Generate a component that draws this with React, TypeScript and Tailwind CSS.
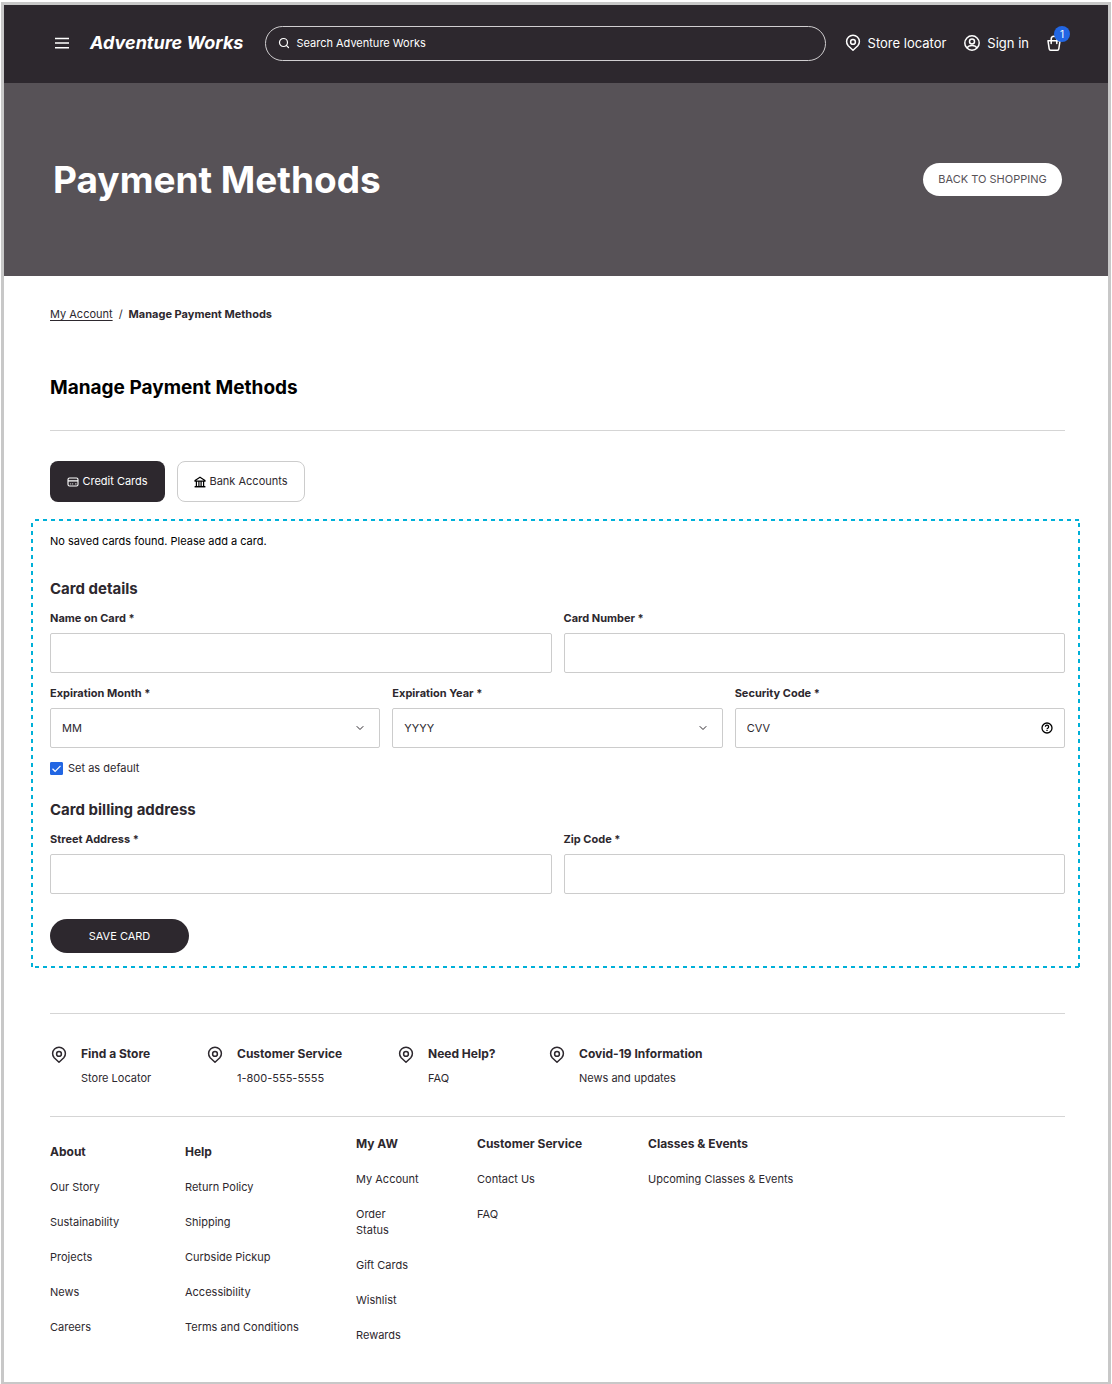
import type { ReactNode, SVGProps } from "react";
import { ChevronDown, Search } from "lucide-react";

const services = [
  { title: "Find a Store", text: "Store Locator" },
  { title: "Customer Service", text: "1-800-555-5555" },
  { title: "Need Help?", text: "FAQ" },
  { title: "Covid-19 Information", text: "News and updates" },
];

const footerColumns = [
  {
    title: "About",
    links: ["Our Story", "Sustainability", "Projects", "News", "Careers"],
    className: "pt-2",
  },
  {
    title: "Help",
    links: ["Return Policy", "Shipping", "Curbside Pickup", "Accessibility", "Terms and Conditions"],
    className: "pt-2",
  },
  {
    title: "My AW",
    links: ["My Account", "Order Status", "Gift Cards", "Wishlist", "Rewards"],
    className: "w-16",
  },
  { title: "Customer Service", links: ["Contact Us", "FAQ"], className: "" },
  { title: "Classes & Events", links: ["Upcoming Classes & Events"], className: "" },
];

function PinIcon(props: SVGProps<SVGSVGElement>) {
  return (
    <svg viewBox="0 0 18 18" fill="none" stroke="currentColor" strokeWidth="1.5" aria-hidden="true" {...props}>
      <path d="M9 16.2 4.2 11.8A6.4 6.4 0 1 1 13.8 11.8L9 16.2Z" strokeLinejoin="round" />
      <circle cx="9" cy="7.9" r="2.4" />
    </svg>
  );
}

function UserIcon(props: SVGProps<SVGSVGElement>) {
  return (
    <svg viewBox="0 0 18 18" fill="none" stroke="currentColor" strokeWidth="1.5" aria-hidden="true" {...props}>
      <circle cx="9" cy="9" r="7.2" />
      <circle cx="9" cy="7.4" r="2.5" />
      <path d="M4 14c1-1.9 2.8-2.6 5-2.6s4 .7 5 2.6" />
    </svg>
  );
}

function BagIcon(props: SVGProps<SVGSVGElement>) {
  return (
    <svg viewBox="0 0 16 18" fill="none" stroke="currentColor" strokeWidth="1.5" aria-hidden="true" {...props}>
      <path d="M2 6.8h12l-1.2 8c-.1.8-.6 1.4-1.4 1.4H4.6c-.8 0-1.3-.6-1.4-1.4L2 6.8Z" strokeLinejoin="round" />
      <path d="M5.2 9.6V5a2.8 2.8 0 0 1 5.6 0v4.6" strokeLinecap="round" />
    </svg>
  );
}

function CardIcon() {
  return (
    <svg className="h-3 w-3" viewBox="0 0 12 12" fill="none" stroke="currentColor" aria-hidden="true">
      <rect x="1" y="2" width="10" height="8" rx="1.5" strokeWidth="1.1" />
      <path d="M1 4.9h10" strokeWidth="1.3" />
      <path d="M3 7.9h1.2M5 7.9h1.2M8 7.9h1.6" strokeWidth="0.8" />
    </svg>
  );
}

function BankIcon() {
  return (
    <svg className="h-3 w-3" viewBox="0 0 12 12" fill="none" stroke="#000" strokeWidth="1.2" aria-hidden="true">
      <path d="M1 4.4 6 1.2l5 3.2v.8H1v-.8Z" strokeLinejoin="round" />
      <path d="M2.4 5v5M4.9 5v5M7.1 5v5M9.6 5v5" />
      <path d="M.6 10.7h10.8" strokeWidth="1.5" />
    </svg>
  );
}

function HelpIcon() {
  return (
    <svg className="h-3 w-3" viewBox="0 0 12 12" fill="none" stroke="#000" strokeWidth="1.3" aria-hidden="true">
      <circle cx="6" cy="6" r="5" />
      <path d="M4.4 4.8a1.6 1.6 0 1 1 2.4 1.4c-.5.3-.8.5-.8 1" />
      <path d="M6 8v1.1" />
    </svg>
  );
}

const fieldClass =
  "h-10 w-full rounded-[2px] border border-[#cccccc] bg-white px-[11px] text-[11px] text-[#2d282e] outline-none placeholder:text-[#2d282e] placeholder:opacity-100 focus:border-[#2266e3]";

function Field({ id, label, children }: { id: string; label: string; children: ReactNode }) {
  return (
    <div>
      <label htmlFor={id} className="mb-[7px] block text-[11px] leading-4 font-bold">
        {label} *
      </label>
      <div className="relative">{children}</div>
    </div>
  );
}

function SelectField({ id, label, hint }: { id: string; label: string; hint: string }) {
  return (
    <Field id={id} label={label}>
      <select id={id} className={`${fieldClass} appearance-none`}>
        <option>{hint}</option>
      </select>
      <ChevronDown className="pointer-events-none absolute top-3.5 right-3.5 h-3 w-3" strokeWidth={2} />
    </Field>
  );
}

function Header() {
  return (
    <header className="flex h-[78px] items-center bg-[#2d282e] pr-[38px] pb-0.5 pl-[50px] text-white">
      <button type="button" aria-label="Menu" className="mr-5">
        <svg className="h-4 w-4" viewBox="0 0 16 16" stroke="currentColor" strokeWidth="1.4" aria-hidden="true">
          <path d="M1 3.5h14M1 8h14M1 12.7h14" />
        </svg>
      </button>
      <a href="#" className="text-[18px] leading-6 font-bold whitespace-nowrap italic">
        Adventure Works
      </a>
      <label className="mr-[18px] ml-[22px] flex h-[35px] min-w-0 flex-1 items-center gap-1.5 rounded-full border border-[#d0ced0] px-3">
        <Search className="h-3 w-3" strokeWidth={2.4} />
        <input
          type="search"
          aria-label="Search Adventure Works"
          placeholder="Search Adventure Works"
          className="min-w-0 flex-1 bg-transparent text-[11px] outline-none placeholder:text-white placeholder:opacity-100"
        />
      </label>
      <nav className="flex items-center gap-[17px] text-[13px] leading-5 whitespace-nowrap">
        <a href="#" className="flex items-center gap-1.5">
          <PinIcon className="h-[18px] w-[18px]" />
          Store locator
        </a>
        <a href="#" className="flex items-center gap-1.5">
          <UserIcon className="h-[18px] w-[18px]" />
          Sign in
        </a>
        <a href="#" aria-label="Cart, 1 item" className="relative pr-2">
          <BagIcon className="h-[18px] w-4" />
          <span className="absolute -top-2 right-0 flex h-4 w-4 items-center justify-center rounded-full bg-[#2266e3] text-[10px] leading-none">
            1
          </span>
        </a>
      </nav>
    </header>
  );
}

function Footer() {
  return (
    <footer className="mt-[45px] border-t border-[#d5d5d5] text-[11px] leading-4">
      <div className="grid grid-cols-[156px_191px_151px_1fr] pt-8 pb-[30px]">
        {services.map((item) => (
          <div key={item.title} className="flex gap-[13px]">
            <PinIcon className="h-[18px] w-[18px] shrink-0" />
            <div>
              <h3 className="text-[12px] leading-4 font-bold">{item.title}</h3>
              <p className="mt-2">{item.text}</p>
            </div>
          </div>
        ))}
      </div>
      <div className="grid grid-cols-[135px_171px_121px_171px_1fr] border-t border-[#d5d5d5] pt-[19px]">
        {footerColumns.map((column) => (
          <div key={column.title} className={column.className}>
            <h3 className="text-[12px] leading-4 font-bold">{column.title}</h3>
            <ul>
              {column.links.map((link) => (
                <li key={link} className="mt-[19px]">
                  <a href="#">{link}</a>
                </li>
              ))}
            </ul>
          </div>
        ))}
      </div>
    </footer>
  );
}

export default function App() {
  return (
    <div className="min-h-screen bg-white px-px pt-0.5 font-['Inter',sans-serif] text-[#2d282e]">
      <div className="border-[3px] border-b-2 border-[#c8c8c8] pb-[39px]">
        <Header />

        <section className="flex h-[193px] items-center justify-between bg-[#575257] pr-[46px] pl-[49px]">
          <h1 className="text-[37px] leading-10 font-bold text-white">Payment Methods</h1>
          <button type="button" className="h-[33px] w-[139px] rounded-full bg-white text-[11px] text-[#575257]">
            BACK TO SHOPPING
          </button>
        </section>

        <main className="pt-[30px] pr-[43px] pl-[46px]">
          <nav aria-label="Breadcrumb" className="flex gap-1.5 text-[11px] leading-4">
            <a href="#" className="underline underline-offset-2">
              My Account
            </a>
            <span>/</span>
            <span className="font-bold">Manage Payment Methods</span>
          </nav>

          <h2 className="mt-[54px] border-b border-[#d5d5d5] pb-[30px] text-[19px] leading-6 font-bold text-black">
            Manage Payment Methods
          </h2>

          <div className="mt-[30px] flex gap-3 text-[11px]">
            <button
              type="button"
              className="flex h-[41px] w-[115px] items-center justify-center gap-[3px] rounded-lg bg-[#2d282e] text-white"
            >
              <CardIcon />
              Credit Cards
            </button>
            <button
              type="button"
              className="flex h-[41px] w-32 items-center justify-center gap-[3px] rounded-lg border border-[#cccccc]"
            >
              <BankIcon />
              Bank Accounts
            </button>
          </div>

          <form
            onSubmit={(event) => event.preventDefault()}
            className="mt-[17px] -mr-[15px] -ml-[19px] bg-[repeating-linear-gradient(90deg,transparent_0_4px,#00b0d8_4px_8px),repeating-linear-gradient(90deg,transparent_0_4px,#00b0d8_4px_8px),repeating-linear-gradient(180deg,transparent_0_4px,#00b0d8_4px_8px),repeating-linear-gradient(180deg,transparent_0_4px,#00b0d8_4px_8px)] bg-[position:top,bottom,left,right] bg-[size:100%_2px,100%_2px,2px_100%,2px_100%] bg-no-repeat pt-3.5 pr-[15px] pb-[15px] pl-[19px]"
          >
            <p className="text-[11px] leading-4 text-black">No saved cards found. Please add a card.</p>

            <h3 className="mt-[30px] text-[15px] leading-5 font-bold">Card details</h3>
            <div className="mt-[11px] grid grid-cols-2 gap-3">
              <Field id="name" label="Name on Card">
                <input id="name" type="text" className={fieldClass} />
              </Field>
              <Field id="number" label="Card Number">
                <input id="number" type="text" className={fieldClass} />
              </Field>
            </div>
            <div className="mt-3 grid grid-cols-3 gap-3">
              <SelectField id="month" label="Expiration Month" hint="MM" />
              <SelectField id="year" label="Expiration Year" hint="YYYY" />
              <Field id="cvv" label="Security Code">
                <input id="cvv" type="text" placeholder="CVV" className={fieldClass} />
                <span className="absolute top-3.5 right-3">
                  <HelpIcon />
                </span>
              </Field>
            </div>
            <label className="mt-3 flex items-center gap-[5px] text-[11px] leading-4">
              <span className="relative h-[13px] w-[13px]">
                <input
                  type="checkbox"
                  defaultChecked
                  className="peer block h-[13px] w-[13px] appearance-none rounded-[1px] border border-[#2266e3] checked:bg-[#2266e3]"
                />
                <svg
                  className="pointer-events-none absolute inset-0 hidden text-white peer-checked:block"
                  viewBox="0 0 13 13"
                  fill="none"
                  stroke="currentColor"
                  strokeWidth="1.2"
                  aria-hidden="true"
                >
                  <path d="m2.5 6.8 2.6 2.5 5.4-5.5" />
                </svg>
              </span>
              Set as default
            </label>

            <h3 className="mt-6 text-[15px] leading-5 font-bold">Card billing address</h3>
            <div className="mt-[11px] grid grid-cols-2 gap-3">
              <Field id="street" label="Street Address">
                <input id="street" type="text" className={fieldClass} />
              </Field>
              <Field id="zip" label="Zip Code">
                <input id="zip" type="text" className={fieldClass} />
              </Field>
            </div>
            <button
              type="submit"
              className="mt-[25px] block h-[34px] w-[139px] rounded-full bg-[#2d282e] text-[11px] text-white"
            >
              SAVE CARD
            </button>
          </form>

          <Footer />
        </main>
      </div>
    </div>
  );
}
